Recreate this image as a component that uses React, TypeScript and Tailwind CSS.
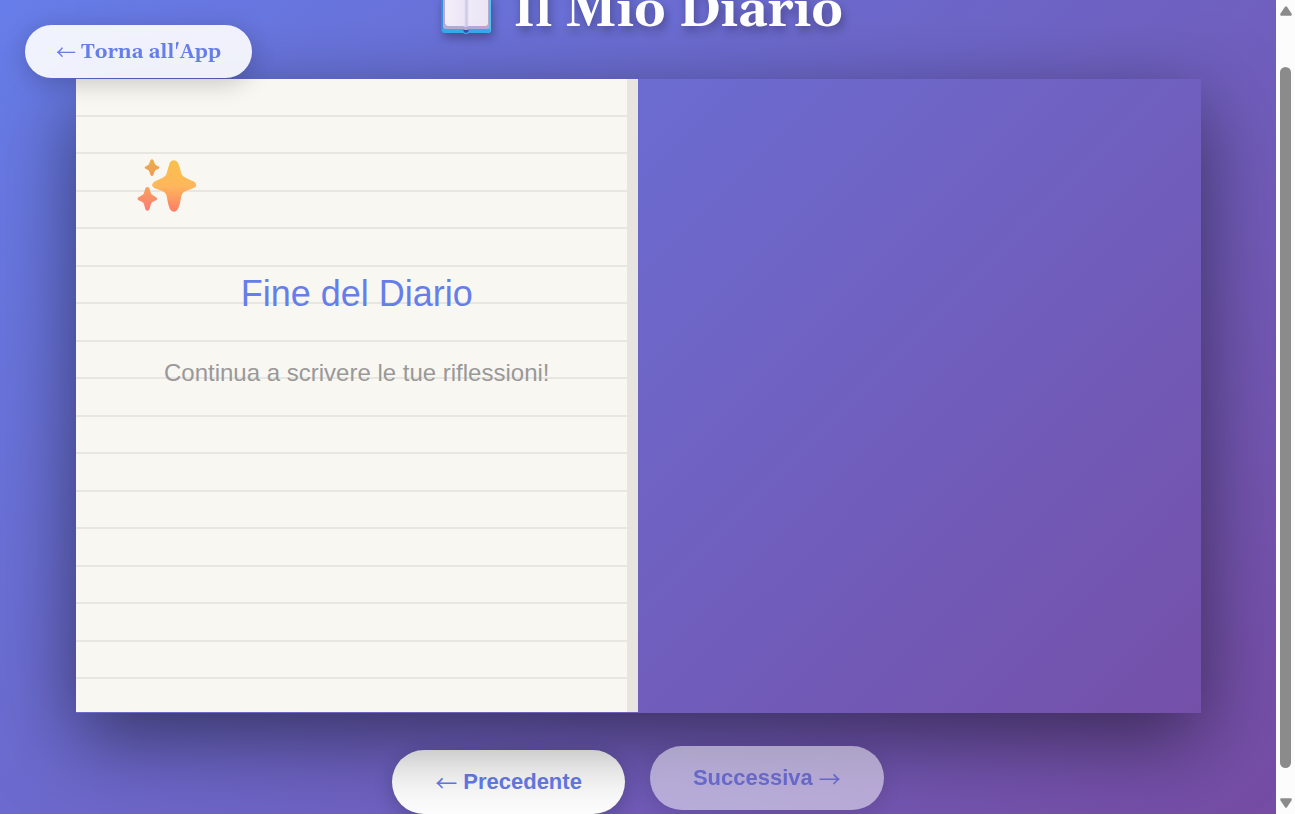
import { useState } from "react";

const RULES = Array.from({ length: 16 }, (_, i) => i);

function Arrow({ children }: { children: string }) {
  return (
    <span className="font-['Noto_Sans_CJK_JP',sans-serif] font-normal leading-none">{children}</span>
  );
}

function OpenBook() {
  return (
    <svg viewBox="0 0 50 46" className="h-[46px] w-[50px] shrink-0 drop-shadow-[2px_5px_5px_rgba(0,0,0,0.3)]" aria-hidden="true">
      <defs>
        <linearGradient id="cover" x1="0" y1="0" x2="1" y2="0">
          <stop offset="0" stopColor="#3391d6" />
          <stop offset="0.5" stopColor="#3da6ee" />
          <stop offset="1" stopColor="#4cc9f8" />
        </linearGradient>
        <linearGradient id="sheet" x1="0" y1="0" x2="1" y2="0">
          <stop offset="0" stopColor="#f4f0fa" />
          <stop offset="0.44" stopColor="#ece7f6" />
          <stop offset="0.5" stopColor="#cfc8e6" />
          <stop offset="0.56" stopColor="#f0ecf8" />
          <stop offset="1" stopColor="#ece6f5" />
        </linearGradient>
      </defs>
      <path d="M2 8H48Q50 8 50 10V42Q50 45 47 45H28Q27 46 25 46T22 45H3Q0 45 0 42V10Q0 8 2 8Z" fill="url(#cover)" />
      <path d="M1 43Q2 45 4 45H46Q49 45 49 42V41H1Z" fill="#38aaf1" />
      <path d="M2 5H4V37H23L25 40 27 37H46V5H48V39Q48 41 46 41H27L25 43 23 41H4Q2 41 2 39Z" fill="#b8acd4" />
      <path d="M4 3Q16 1 25 5Q34 1 47 3V35Q47 38 44 38H28Q26 38 25 40Q24 38 22 38H8Q4 38 4 35Z" fill="url(#sheet)" />
      <path d="M22 42H28Q27 45 25 45T22 42Z" fill="#2a55a8" />
    </svg>
  );
}

function Sparkles() {
  return (
    <svg viewBox="0 0 60 54" className="h-[54px] w-[60px]" aria-hidden="true">
      <defs>
        <linearGradient id="gold" x1="0" y1="0" x2="0" y2="1">
          <stop offset="0" stopColor="#f8c04a" />
          <stop offset="0.5" stopColor="#ffb75c" />
          <stop offset="1" stopColor="#fb7d67" />
        </linearGradient>
        <linearGradient id="amber" x1="0" y1="0" x2="0" y2="1">
          <stop offset="0" stopColor="#e9b04b" />
          <stop offset="1" stopColor="#f39a58" />
        </linearGradient>
        <linearGradient id="coral" x1="0" y1="0" x2="0" y2="1">
          <stop offset="0" stopColor="#f8a35b" />
          <stop offset="1" stopColor="#fb7b78" />
        </linearGradient>
      </defs>
      <path
        d="M32.8 3.5Q37 -1 40.8 3.5C43 8 43.6 12 44.6 15.2Q45.8 17.8 48.6 18.8L57.2 22.8Q61.4 26 57.2 28.8L48.2 32.3Q45.2 33.5 44.4 36.8C43.4 42 43 46 40.6 50.6Q37 55 33.2 50.6C31 46 30.6 42 29.6 36.8Q28.8 33.4 25.8 32.2L17.2 29Q13 26.2 17.2 22.8L25.6 18.8Q28.6 17.6 29.4 15Z"
        fill="url(#gold)"
      />
      <path
        d="M13.4 1.2Q15 -.8 16.5 1.2L17.7 4.6Q18.1 5.8 19.3 6.3L21.5 7.5Q23.3 8.7 21.5 9.8L19.2 10.8Q18 11.3 17.6 12.5L16.4 16Q15 18 13.5 16L12.3 12.5Q11.9 11.3 10.7 10.8L8.5 9.8Q6.8 8.7 8.5 7.5L10.7 6.3Q11.8 5.8 12.2 4.6Z"
        fill="url(#amber)"
      />
      <path
        d="M8.4 29.2Q10.4 26.8 12.4 29.2L14 34.2Q14.5 35.7 15.9 36.3L19.1 38.3Q21.3 39.8 19.1 41.3L15.8 42.8Q14.5 43.5 14 45L12.3 50.4Q10.4 53 8.5 50.4L6.9 45Q6.4 43.5 4.9 42.8L1.5 41.3Q-.6 39.8 1.5 38.3L4.9 36.3Q6.4 35.7 6.9 34.2Z"
        fill="url(#coral)"
      />
    </svg>
  );
}

function ScrollRail() {
  return (
    <div className="flex w-[19px] shrink-0 flex-col items-center bg-[#fcfcfc] py-[6px]" aria-hidden="true">
      <svg viewBox="0 0 12 10" className="h-[10px] w-3">
        <path d="M5 .8Q6 -.4 7 .8L11.5 7.5Q12.4 9.5 10.6 9.7H1.4Q-.4 9.5 .5 7.5Z" fill="#8b8b8b" />
      </svg>
      <div className="mt-[51px] mb-[30px] w-[11px] flex-1 rounded-full bg-[#8b8b8b]" />
      <svg viewBox="0 0 12 10" className="h-[10px] w-3">
        <path d="M5 9.2Q6 10.4 7 9.2L11.5 2.5Q12.4 .5 10.6 .3H1.4Q-.4 .5 .5 2.5Z" fill="#8b8b8b" />
      </svg>
    </div>
  );
}

export default function App() {
  const [ended, setEnded] = useState(true);

  return (
    <div className="flex h-screen overflow-hidden font-['Liberation_Sans',Arial,sans-serif]">
      <main className="flex min-w-0 flex-1 flex-col overflow-hidden bg-[linear-gradient(135deg,#667eea_-2%,#764ba2_102%)]">
        <header className="flex h-[79px] shrink-0 items-start justify-center gap-[22px] pl-2">
          <div className="-mt-3">
            <OpenBook />
          </div>
          <h1 className="-mt-5 font-[Georgia,Gelasio,'Liberation_Serif',serif] text-[50px] leading-[64px] font-bold text-white [text-shadow:2px_5px_10px_rgba(0,0,0,0.3)]">
            Il Mio Diario
          </h1>
        </header>

        <a
          href="#app"
          className="fixed top-[25px] left-[25px] z-20 flex h-[53px] items-center gap-[5px] rounded-full bg-white/90 px-[31px] font-[Georgia,Gelasio,'Liberation_Serif',serif] text-xl font-bold text-[#667eea] shadow-[0_5px_25px_rgba(0,0,0,0.2)]"
        >
          <Arrow>←</Arrow>
          Torna all'App
        </a>

        <section className="relative z-10 mx-auto grid w-full max-w-[1125px] flex-1 grid-cols-2 pb-px shadow-[0_25px_75px_rgba(0,0,0,0.5)]">
          <article className="grid bg-[#f9f7f2]">
            <div className="col-start-1 row-start-1 flex" aria-hidden="true">
              <div className="flex flex-1 flex-col pb-[33px]">
                {RULES.map((n) => (
                  <div key={n} className="flex-1 border-b-2 border-[#e8e6e1]" />
                ))}
              </div>
              <div className="w-[11px] bg-[#e8e5e0]" />
            </div>
            <div className="col-start-1 row-start-1 px-[61px] pt-20">
              <Sparkles />
              <h2 className="mt-[61px] text-center text-4xl text-[#667eea]">Fine del Diario</h2>
              <p className="mt-[43px] text-center text-2xl text-[#999]">Continua a scrivere le tue riflessioni!</p>
            </div>
          </article>
        </section>

        <nav className="flex h-[101px] shrink-0 items-end justify-center gap-[25px] text-[22px] font-bold text-[#667eea]">
          <button
            type="button"
            onClick={() => setEnded(false)}
            className="flex h-16 items-center gap-[6px] rounded-full bg-white px-[43px] pb-0.5 shadow-[0_5px_19px_rgba(0,0,0,0.2)]"
          >
            <Arrow>←</Arrow>
            Precedente
          </button>
          <button
            type="button"
            disabled={ended}
            onClick={() => setEnded(true)}
            className="z-10 flex h-16 -translate-y-1 items-center gap-[6px] rounded-full bg-white px-[43px] pb-0.5 shadow-[0_5px_19px_rgba(0,0,0,0.2)] disabled:opacity-50"
          >
            Successiva
            <Arrow>→</Arrow>
          </button>
        </nav>
      </main>
      <ScrollRail />
    </div>
  );
}
